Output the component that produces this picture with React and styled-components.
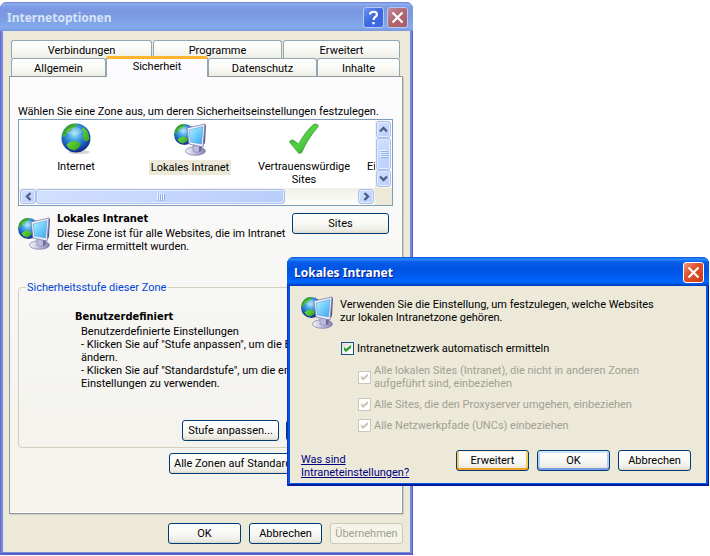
import React, { useId } from "react";
import styled, { createGlobalStyle, css } from "styled-components";

const GlobalStyle = createGlobalStyle`
  * { box-sizing: border-box; }
  body { margin: 0; background: #fff; }
  body, button, input {
    font-family: Roboto, Tahoma, sans-serif;
    font-size: 11px;
    line-height: 13px;
    color: #000;
  }
`;

const Desktop = styled.main`
  position: relative;
  min-height: 100vh;
  padding-top: 2px;
`;

const Window = styled.section`
  display: flex;
  flex-direction: column;
  border-radius: 7px 7px 0 0;
  background: ${(p) => (p.$active ? "#0855dd" : "#7588dd")};
  box-shadow: inset 1px 0 ${(p) => (p.$active ? "#0831d9" : "#6470d0")},
    inset -1px 0 ${(p) => (p.$active ? "#00138c" : "#5560c8")},
    inset 0 -2px ${(p) => (p.$active ? "#001ea0" : "#5860c8")};
  padding: 0 3px 3px;
  overflow: hidden;
`;

const OptionsWindow = styled(Window)`
  margin-right: 297px;
`;

const ZoneDialog = styled(Window)`
  position: absolute;
  top: 257px;
  left: 287px;
  right: 1px;
`;

const TitleBar = styled.header`
  display: flex;
  align-items: center;
  gap: 3px;
  height: 29px;
  margin: 0 -3px;
  padding: 2px 5px 0 7px;
  background: ${(p) =>
    p.$active
      ? "linear-gradient(#0a51d8 0, #2a8cff 2px, #0a5ce8 5px, #0054e3 12px, #005bf0 20px, #0068ff 25px, #0048d0 28px, #0038b0 29px)"
      : "linear-gradient(#6a7fd6 0, #94aff0 2px, #7f9fe8 4px, #7a96df 9px, #7c9ee5 17px, #84abeb 25px, #7a98e0 29px)"};
`;

const Title = styled.h1`
  flex: 1;
  margin: 0;
  font-family: "Noto Sans", "Trebuchet MS", sans-serif;
  font-weight: bold;
  font-size: 12px;
  line-height: 18px;
  color: ${(p) => (p.$active ? "#fff" : "#d8e4f8")};
  text-shadow: ${(p) => (p.$active ? "1px 1px #0a1883" : "none")};
`;

const CaptionButton = styled.button`
  display: grid;
  place-items: center;
  width: 21px;
  height: 21px;
  padding: 0;
  border: 1px solid ${(p) => (p.$kind === "close" ? "#fff" : "#b8c8f4")};
  border-radius: 3px;
  background: ${(p) =>
    p.$kind === "help"
      ? "linear-gradient(135deg, #6d92f2, #3d68e0 50%, #3a69e8)"
      : p.$kind === "close"
        ? "linear-gradient(135deg, #f0987c, #e0512c 40%, #c83c14)"
        : "linear-gradient(135deg, #c08a9c, #b26670 50%, #a85c68)"};
`;

const Body = styled.div`
  background: #ece9d8;
`;

const OptionsBody = styled(Body)`
  padding: 9px 7px 8px 6px;
`;

const TabRow = styled.div`
  display: grid;
  grid-template-columns: ${(p) => p.$columns};
  grid-template-rows: 18px;
  align-items: end;
  column-gap: ${(p) => p.$gap || "0"};
  margin: 0 3px 0 2px;
`;

const Tab = styled.button`
  height: 18px;
  padding: 2px 0 0;
  border: 1px solid #91a7b4;
  border-bottom: 0;
  border-radius: 3px 3px 0 0;
  background: linear-gradient(#fff, #f8f8f4 60%, #eeede4);
  ${(p) =>
    p.$selected &&
    css`
      height: 21px;
      padding: 0 0 3px;
      margin-bottom: -1px;
      border-top: 3px solid #ffb52e;
      background: #fcfcfe;
      z-index: 1;
    `}
`;

const Panel = styled.div`
  padding: 28px 9px 39px 8px;
  border: 1px solid #919b9c;
  box-shadow: 1px 1px #d0cebf, inset -1px -1px #fff;
  background: linear-gradient(#fcfcfe, #f4f3ee 80%);
`;

const Text = styled.p`
  margin: 0;
  white-space: nowrap;
`;

const Heading = styled.h2`
  margin: 0;
  font-family: "DejaVu Sans Condensed", "DejaVu Sans", Tahoma, sans-serif;
  font-size: 11px;
  line-height: 13px;
  white-space: nowrap;
`;

const ZoneList = styled.div`
  display: grid;
  grid-template-columns: minmax(0, 1fr) 17px;
  grid-template-rows: 68px 17px;
  margin-top: 1px;
  border: 1px solid #7f9db9;
  background: #fff;
`;

const ZoneItems = styled.div`
  display: flex;
  overflow: hidden;
  padding-top: 3px;
`;

const ZoneItem = styled.button`
  display: flex;
  flex: none;
  flex-direction: column;
  align-items: center;
  gap: 4px;
  width: 114px;
  padding: 0;
  border: 0;
  background: none;
  white-space: nowrap;
`;

const ZoneLabel = styled.span`
  padding: 1px 2px;
  background: ${(p) => (p.$selected ? "#ece9d8" : "transparent")};
`;

const ScrollTrack = styled.div`
  display: flex;
  flex-direction: ${(p) => (p.$vertical ? "column" : "row")};
  padding: 1px;
  background: linear-gradient(${(p) => (p.$vertical ? "90deg" : "180deg")}, #f0efe8, #fefefb);
`;

const scrollFace = css`
  display: grid;
  place-items: center;
  border: 1px solid #a9bfec;
  border-radius: 3px;
  box-shadow: inset 0 0 0 1px #e4ecff;
  background: linear-gradient(135deg, #d2e0ff, #b9cdfb);
`;

const ScrollButton = styled.button`
  ${scrollFace}
  flex: none;
  width: ${(p) => (p.$vertical ? "15px" : "16px")};
  height: ${(p) => (p.$vertical ? "17px" : "15px")};
  padding: 0;
`;

const ScrollThumb = styled.div`
  ${scrollFace}
  flex: ${(p) => p.$grow};
`;

const ScrollSpace = styled.div`
  flex: ${(p) => p.$grow};
`;

const ScrollCorner = styled.div`
  background: #ece9d8;
`;

const ZoneSummary = styled.div`
  display: flex;
  align-items: flex-start;
  padding: 6px 4px 0 0;
`;

const SummaryIcon = styled.div`
  flex: none;
  width: 39px;
  padding-top: 5px;
`;

const SummaryText = styled.div`
  display: grid;
  flex: 1;
  gap: 2px;
  min-width: 0;
`;

const PushButton = styled.button`
  height: 21px;
  min-width: ${(p) => p.$width || "73px"};
  padding: 0 2px;
  border: 1px solid #003c74;
  border-radius: 3px;
  background: linear-gradient(#fff, #f6f6f1 60%, #eae8e0 90%, #d8d4c8);
  white-space: nowrap;
  ${(p) =>
    p.$tone === "hot" &&
    css`
      box-shadow: inset 0 1px #fff0cf, inset 0 -2px #f0a020, inset 2px 0 #fbc861, inset -2px 0 #fbc861;
    `}
  ${(p) =>
    p.$tone === "default" &&
    css`
      box-shadow: inset 0 2px #cee7ff, inset 0 -2px #7a98e6, inset 2px 0 #b2cdf7, inset -2px 0 #b2cdf7;
    `}
  &:disabled {
    border-color: #c9c7ba;
    background: #f5f4ea;
    color: #a1a192;
  }
`;

const SitesButton = styled(PushButton)`
  margin-top: 1px;
`;

const LevelGroup = styled.fieldset`
  min-width: 0;
  margin: 28px 0 5px;
  padding: 16px 3px 6px 7px;
  border: 1px solid #d0d0bf;
  border-radius: 4px;
`;

const Legend = styled.legend`
  padding: 0 2px 0 1px;
  color: #0046d5;
`;

const LevelText = styled.div`
  display: grid;
  gap: 2px;
  padding-left: 49px;
  overflow: hidden;
`;

const LevelDescription = styled(Text)`
  padding-left: 6px;
`;

const ButtonRow = styled.div`
  display: flex;
  justify-content: flex-end;
  gap: ${(p) => p.$gap || "8px"};
`;

const LevelButtons = styled(ButtonRow)`
  margin-top: 30px;
`;

const ResetRow = styled(ButtonRow)`
  padding-right: 4px;
`;

const OptionsFooter = styled(ButtonRow)`
  margin-top: 9px;
`;

const DialogBody = styled(Body)`
  padding: 10px 15px 4px 11px;
`;

const DialogIntro = styled.div`
  display: flex;
  gap: 6px;
`;

const IntroText = styled(Text)`
  padding-top: 2px;
`;

const Options = styled.div`
  display: grid;
  gap: 9px;
  padding: 13px 0 0 40px;
`;

const SubOptions = styled.div`
  display: grid;
  gap: 8px;
  padding-left: 17px;
`;

const CheckRow = styled.div`
  display: flex;
  align-items: center;
  gap: 3px;
  white-space: nowrap;
`;

const CheckInput = styled.input`
  appearance: none;
  display: grid;
  place-items: center;
  flex: none;
  width: 13px;
  height: 13px;
  margin: 0;
  border: 1px solid #1c5180;
  background: linear-gradient(135deg, #dcdcd7, #fff);
  &:checked::after {
    content: "";
    width: 7px;
    height: 7px;
    background: #21a121;
    clip-path: polygon(0 28%, 28% 57%, 100% 0, 100% 40%, 28% 100%, 0 72%);
  }
  &:disabled {
    border-color: #cac8bb;
    background: #fff;
  }
  &:disabled::after {
    background: #cac8bb;
  }
`;

const CheckLabel = styled.label`
  color: ${(p) => (p.$disabled ? "#a1a192" : "#000")};
`;

const DialogFooter = styled.div`
  display: flex;
  align-items: flex-start;
  justify-content: space-between;
  margin-top: 18px;
`;

const HelpLink = styled.a`
  margin-top: 3px;
  color: #000080;
  white-space: nowrap;
`;

function Globe({ id, cx, cy, r }) {
  return (
    <>
      <defs>
        <radialGradient id={id + "g"} cx="0.45" cy="0.35" r="0.65">
          <stop offset="0" stopColor="#9fe4fa" />
          <stop offset="0.4" stopColor="#3c9be0" />
          <stop offset="0.8" stopColor="#174aae" />
          <stop offset="1" stopColor="#142a80" />
        </radialGradient>
        <linearGradient id={id + "l"} x1="0" y1="0" x2="1" y2="1">
          <stop offset="0" stopColor="#1d8a2c" />
          <stop offset="0.5" stopColor="#5ed22d" />
          <stop offset="1" stopColor="#1f8424" />
        </linearGradient>
      </defs>
      <g transform={`translate(${cx} ${cy}) scale(${r / 15})`}>
        <circle r="15" fill={`url(#${id}g)`} />
        <path
          d="M-14-5C-12-11-7-15-1-15l3 2-3 2-3 1-1 3-4 1-2 4-3 1Zm21-6c3 2 5 4 6 7l1 5-3 3-3-2-1-4 1-4-2-2Zm-13 15 6-1 5 3-2 4-5 3-5-2-3-4Z"
          fill={`url(#${id}l)`}
        />
        <ellipse cx="-2" cy="-7" rx="8" ry="4" fill="#fff" opacity=".2" />
      </g>
    </>
  );
}

function GlobeIcon() {
  const id = useId();
  return (
    <svg width="32" height="32" viewBox="0 0 32 32" aria-hidden="true">
      <ellipse cx="19" cy="29" rx="11" ry="2" fill="#777" opacity=".3" />
      <Globe id={id} cx={16} cy={15} r={14.5} />
    </svg>
  );
}

function IntranetIcon() {
  const id = useId();
  return (
    <svg width="33" height="33" viewBox="0 0 33 33" aria-hidden="true">
      <defs>
        <linearGradient id={id + "s"} x1="0" y1="0" x2="1" y2="1">
          <stop offset="0" stopColor="#b8f2ff" />
          <stop offset="0.5" stopColor="#72cef8" />
          <stop offset="1" stopColor="#3fa4ee" />
        </linearGradient>
        <linearGradient id={id + "b"}>
          <stop offset="0" stopColor="#f6f6ff" />
          <stop offset="1" stopColor="#8480b0" />
        </linearGradient>
      </defs>
      <Globe id={id} cx={10.5} cy={11.5} r={10.5} />
      <ellipse cx="21.5" cy="28" rx="10" ry="4.3" fill={`url(#${id}b)`} stroke="#8984af" strokeWidth="0.8" />
      <path d="m19 22 7-1 0 7q-4 3-7 0Z" fill="#bcb9dc" stroke="#8883ad" strokeWidth="0.6" />
      <path d="m25 21 4 0-2 7-2 1Z" fill="#6c6796" />
      <path d="m30 1 2 1-1 18-3 4Z" fill="#595488" />
      <path d="M13 5 31 1 29 24 15 21Z" fill="#f1f2fc" stroke="#7e7baa" strokeWidth="0.8" />
      <path d="M15 7 29 3.500 27.500 21 16.500 19Z" fill={`url(#${id}s)`} stroke="#4992d0" strokeWidth="0.5" />
    </svg>
  );
}

function TrustedIcon() {
  const id = useId();
  return (
    <svg width="32" height="32" viewBox="0 0 32 32" aria-hidden="true">
      <defs>
        <linearGradient id={id} x1="0" y1="0" x2="1" y2="1">
          <stop offset="0" stopColor="#2fa334" />
          <stop offset="0.5" stopColor="#55d043" />
          <stop offset="1" stopColor="#20982a" />
        </linearGradient>
      </defs>
      <path
        d="M1.500 19c1-2 3-2.500 4.500-1.500l4.500 3.500C15 13 20 6 25.500 1.500c2.500-1 6 0 4.500 2.500C23 12 18 20 14.500 28c-1 3-3.500 3-4.500 1.500Z"
        fill={`url(#${id})`}
        stroke="#2b8c31"
        strokeWidth="0.6"
      />
    </svg>
  );
}

function RestrictedIcon() {
  return (
    <svg width="32" height="32" viewBox="0 0 32 32" aria-hidden="true">
      <circle cx="16" cy="16" r="11" fill="none" stroke="#d02020" strokeWidth="4" />
      <path d="m8 8 16 16" stroke="#d02020" strokeWidth="4" />
    </svg>
  );
}

function CloseGlyph() {
  return (
    <svg width="13" height="13" viewBox="0 0 13 13" aria-hidden="true">
      <path d="m1.500 1.500 10 10m0-10-10 10" stroke="#fff" strokeWidth="2.200" />
    </svg>
  );
}

function HelpGlyph() {
  return (
    <svg width="13" height="15" viewBox="0 0 13 15" aria-hidden="true">
      <path d="M3 4.500C3 .8 10 .8 10 4.500 10 7 6.500 7 6.500 10" fill="none" stroke="#fff" strokeWidth="2.200" />
      <path d="M5.300 12h2.400v2.300H5.300Z" fill="#fff" />
    </svg>
  );
}

const arrows = {
  up: "m1 6.500 3.500-3.500 3.500 3.500",
  down: "m1 2.500 3.500 3.500 3.500-3.500",
  left: "m6.500 1-3.500 3.500 3.500 3.500",
  right: "m2.500 1 3.500 3.500-3.500 3.500",
};

function Arrow({ dir }) {
  return (
    <svg width="9" height="9" viewBox="0 0 9 9" aria-hidden="true">
      <path d={arrows[dir]} fill="none" stroke="#4d6185" strokeWidth="2.400" />
    </svg>
  );
}

function Grip({ vertical }) {
  return (
    <svg width="8" height="8" viewBox="0 0 8 8" aria-hidden="true">
      <path d={vertical ? "M0 .5h7m-7 2h7m-7 2h7m-7 2h7" : "M.5 0v7m2-7v7m2-7v7m2-7v7"} stroke="#eef4fe" />
      <path d={vertical ? "M1 1.500h7m-7 2h7m-7 2h7m-7 2h7" : "M1.500 1v7m2-7v7m2-7v7m2-7v7"} stroke="#8cb0f8" />
    </svg>
  );
}

function CheckOption({ children, disabled }) {
  const id = useId();
  return (
    <CheckRow>
      <CheckInput id={id} type="checkbox" defaultChecked disabled={disabled} />
      <CheckLabel htmlFor={id} $disabled={disabled}>
        {children}
      </CheckLabel>
    </CheckRow>
  );
}

const zones = [
  { icon: <GlobeIcon />, label: "Internet" },
  { icon: <IntranetIcon />, label: "Lokales Intranet", selected: true },
  { icon: <TrustedIcon />, label: <>Vertrauenswürdige<br />Sites</> },
  { icon: <RestrictedIcon />, label: "Eingeschränkte Sites" },
];

export default function App() {
  return (
    <Desktop>
      <GlobalStyle />
      <OptionsWindow aria-label="Internetoptionen">
        <TitleBar>
          <Title>Internetoptionen</Title>
          <CaptionButton $kind="help" aria-label="Hilfe">
            <HelpGlyph />
          </CaptionButton>
          <CaptionButton aria-label="Schließen">
            <CloseGlyph />
          </CaptionButton>
        </TitleBar>
        <OptionsBody>
          <div role="tablist">
            <TabRow $columns="141fr 129fr 117fr" $gap="1px">
              <Tab role="tab">Verbindungen</Tab>
              <Tab role="tab">Programme</Tab>
              <Tab role="tab">Erweitert</Tab>
            </TabRow>
            <TabRow $columns="95fr 102fr 109fr 83fr">
              <Tab role="tab">Allgemein</Tab>
              <Tab role="tab" aria-selected="true" $selected>Sicherheit</Tab>
              <Tab role="tab">Datenschutz</Tab>
              <Tab role="tab">Inhalte</Tab>
            </TabRow>
          </div>
          <Panel role="tabpanel">
            <Text>Wählen Sie eine Zone aus, um deren Sicherheitseinstellungen festzulegen.</Text>
            <ZoneList>
              <ZoneItems>
                {zones.map((zone, i) => (
                  <ZoneItem key={i}>
                    {zone.icon}
                    <ZoneLabel $selected={zone.selected}>{zone.label}</ZoneLabel>
                  </ZoneItem>
                ))}
              </ZoneItems>
              <ScrollTrack $vertical>
                <ScrollButton $vertical aria-label="Nach oben"><Arrow dir="up" /></ScrollButton>
                <ScrollThumb $grow={1}><Grip vertical /></ScrollThumb>
                <ScrollButton $vertical aria-label="Nach unten"><Arrow dir="down" /></ScrollButton>
              </ScrollTrack>
              <ScrollTrack>
                <ScrollButton aria-label="Nach links"><Arrow dir="left" /></ScrollButton>
                <ScrollThumb $grow={248}><Grip /></ScrollThumb>
                <ScrollSpace $grow={73} />
                <ScrollButton aria-label="Nach rechts"><Arrow dir="right" /></ScrollButton>
              </ScrollTrack>
              <ScrollCorner />
            </ZoneList>
            <ZoneSummary>
              <SummaryIcon><IntranetIcon /></SummaryIcon>
              <SummaryText>
                <Heading>Lokales Intranet</Heading>
                <Text>
                  Diese Zone ist für alle Websites, die im Intranet
                  <br />
                  der Firma ermittelt wurden.
                </Text>
              </SummaryText>
              <SitesButton $width="97px">Sites</SitesButton>
            </ZoneSummary>
            <LevelGroup>
              <Legend>Sicherheitsstufe dieser Zone</Legend>
              <LevelText>
                <Heading>Benutzerdefiniert</Heading>
                <LevelDescription>
                  Benutzerdefinierte Einstellungen
                  <br />- Klicken Sie auf "Stufe anpassen", um die Einstellungen zu
                  <br />ändern.
                  <br />- Klicken Sie auf "Standardstufe", um die empfohlenen
                  <br />Einstellungen zu verwenden.
                </LevelDescription>
              </LevelText>
              <LevelButtons $gap="7px">
                <PushButton $width="97px">Stufe anpassen...</PushButton>
                <PushButton $width="103px">Standardstufe</PushButton>
              </LevelButtons>
            </LevelGroup>
            <ResetRow>
              <PushButton $width="220px">Alle Zonen auf Standardstufe zurücksetzen</PushButton>
            </ResetRow>
          </Panel>
          <OptionsFooter>
            <PushButton>OK</PushButton>
            <PushButton>Abbrechen</PushButton>
            <PushButton disabled>Übernehmen</PushButton>
          </OptionsFooter>
        </OptionsBody>
      </OptionsWindow>

      <ZoneDialog $active role="dialog" aria-label="Lokales Intranet">
        <TitleBar $active>
          <Title $active>Lokales Intranet</Title>
          <CaptionButton $kind="close" aria-label="Schließen">
            <CloseGlyph />
          </CaptionButton>
        </TitleBar>
        <DialogBody>
          <DialogIntro>
            <IntranetIcon />
            <IntroText>
              Verwenden Sie die Einstellung, um festzulegen, welche Websites
              <br />
              zur lokalen Intranetzone gehören.
            </IntroText>
          </DialogIntro>
          <Options>
            <CheckOption>Intranetnetzwerk automatisch ermitteln</CheckOption>
            <SubOptions>
              <CheckOption disabled>
                Alle lokalen Sites (Intranet), die nicht in anderen Zonen
                <br />
                aufgeführt sind, einbeziehen
              </CheckOption>
              <CheckOption disabled>Alle Sites, die den Proxyserver umgehen, einbeziehen</CheckOption>
              <CheckOption disabled>Alle Netzwerkpfade (UNCs) einbeziehen</CheckOption>
            </SubOptions>
          </Options>
          <DialogFooter>
            <HelpLink href="#hilfe">
              Was sind
              <br />
              Intraneteinstellungen?
            </HelpLink>
            <ButtonRow>
              <PushButton $tone="hot">Erweitert</PushButton>
              <PushButton $tone="default">OK</PushButton>
              <PushButton>Abbrechen</PushButton>
            </ButtonRow>
          </DialogFooter>
        </DialogBody>
      </ZoneDialog>
    </Desktop>
  );
}
